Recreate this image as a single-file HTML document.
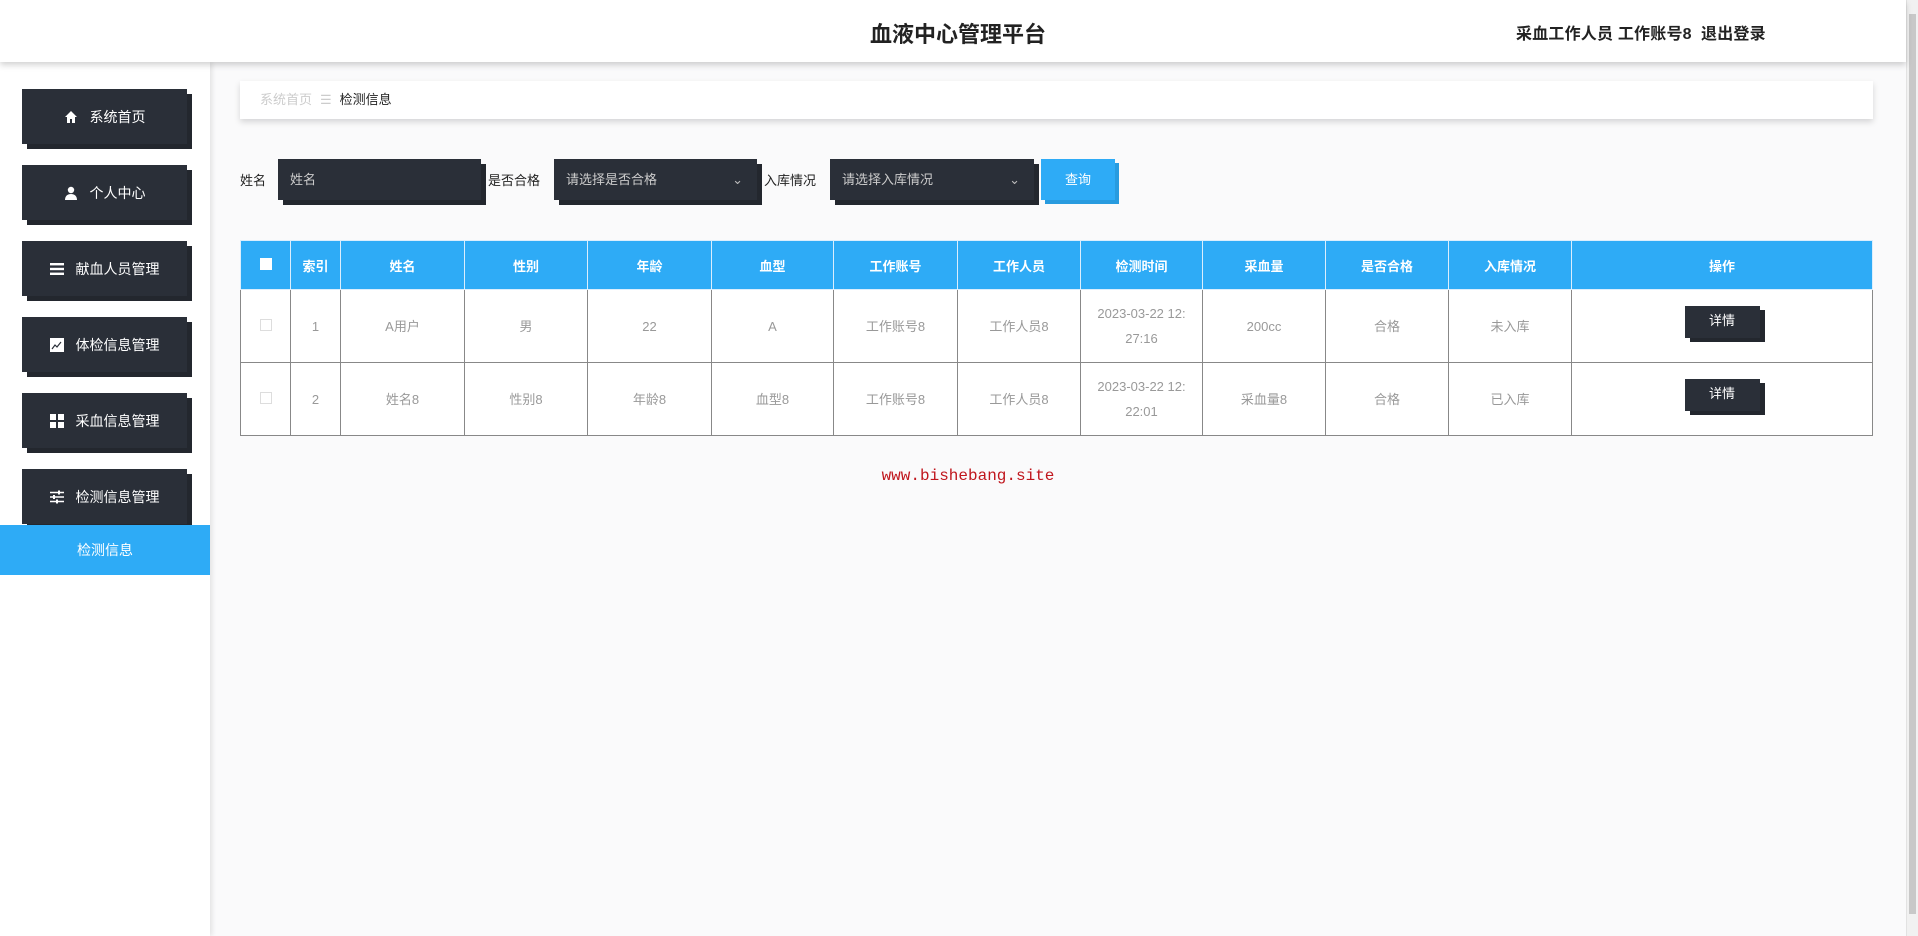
<!DOCTYPE html>
<html><head><meta charset="utf-8"><style>
*{margin:0;padding:0;box-sizing:border-box}
body{width:1918px;height:936px;overflow:hidden;background:#fafafb;font-family:"Liberation Sans","Noto Sans CJK SC",sans-serif;position:relative;color:#333}
.header{position:absolute;left:0;top:0;width:1906px;height:62px;background:#fff;box-shadow:0 3px 6px rgba(0,0,0,.18);z-index:3}
.title{position:absolute;left:0;width:1916px;top:17px;text-align:center;font-size:22px;font-weight:bold;color:#222}
.user{position:absolute;left:1516px;top:20px;font-size:16px;font-weight:bold;color:#222;letter-spacing:0.2px}
.scroll{position:absolute;left:1906px;top:0;width:12px;height:936px;background:#f1f1f1;border-left:1px solid #e2e2e2}
.scroll div{position:absolute;left:2px;top:14px;width:7px;height:900px;background:#c8c8c8}
.side{position:absolute;left:0;top:62px;width:210px;height:874px;background:#fff;box-shadow:2px 0 5px rgba(0,0,0,.1)}
.btn{position:absolute;left:22px;width:165px;height:55px;background:#2a2f38;color:#fff;font-size:14px;display:flex;align-items:center;justify-content:center;box-shadow:5px 5px 0 #23272e}
.btn svg{margin-right:12px}
.active{position:absolute;left:0;top:463px;width:210px;height:50px;background:#2eabf6;color:#fff;font-size:14px;text-align:center;line-height:50px}
.bc{position:absolute;left:240px;top:81px;width:1633px;height:38px;background:#fff;box-shadow:0 3px 6px rgba(0,0,0,.15);font-size:13px;line-height:38px;padding-left:20px}
.lab{position:absolute;top:170px;font-size:13px;color:#222}
.inp{position:absolute;top:159px;height:41px;background:#2a2f38;color:#ccc;font-size:13px;line-height:41px;padding-left:12px;box-shadow:5px 5px 0 #23272e}
.inp .ar{position:absolute;right:14px;top:0;color:#bbb}
.q{position:absolute;left:1041px;top:159px;width:74px;height:41px;background:#2eabf6;color:#fff;font-size:13px;text-align:center;line-height:41px;box-shadow:4px 4px 0 #289bdf}
table{position:absolute;left:240px;top:240px;border-collapse:collapse;width:1633px;font-size:13px}
th{background:#2eabf6;color:#fff;height:49px;border:1px solid #dbeefd;font-weight:bold}
td{height:73px;border:1px solid #888;text-align:center;color:#999;background:#fff;line-height:25px}
table{border:1px solid #777}
.cb{display:inline-block;width:12px;height:12px;border:1px solid #ddd;background:#fff}
th .cb{background:#fff;border:none}
.det{display:inline-block;width:75px;height:32px;background:#2a2f38;color:#fff;line-height:30px;box-shadow:5px 4px 0 #23272e;margin-top:-10px;vertical-align:middle}
.wm{position:absolute;left:0;width:1936px;top:467px;text-align:center;font-family:"Liberation Mono",monospace;color:#c0161d;font-size:16px}
</style></head><body>
<div class="header"><div class="title">血液中心管理平台</div><div class="user">采血工作人员 工作账号8&nbsp; 退出登录</div></div>
<div class="scroll"><div></div></div>
<div class="side">
<div class="btn" style="top:27px"><svg width="14" height="14" viewBox="0 0 14 14"><path d="M7 1L1 7h2v6h3V9h2v4h3V7h2z" fill="#fff"/></svg>系统首页</div>
<div class="btn" style="top:103px"><svg width="14" height="14" viewBox="0 0 14 14"><circle cx="7" cy="4" r="3.2" fill="#fff"/><path d="M1 14c0-4 2.5-6 6-6s6 2 6 6z" fill="#fff"/></svg>个人中心</div>
<div class="btn" style="top:179px"><svg width="14" height="12" viewBox="0 0 14 12"><rect y="0" width="14" height="2.4" fill="#fff"/><rect y="4.8" width="14" height="2.4" fill="#fff"/><rect y="9.6" width="14" height="2.4" fill="#fff"/></svg>献血人员管理</div>
<div class="btn" style="top:255px"><svg width="14" height="14" viewBox="0 0 14 14"><rect width="14" height="14" fill="#fff"/><path d="M2 11l3-4 2 2 4-5" stroke="#2a2f38" stroke-width="1.2" fill="none"/></svg>体检信息管理</div>
<div class="btn" style="top:331px"><svg width="14" height="14" viewBox="0 0 14 14"><rect width="6" height="6" fill="#fff"/><rect x="8" width="6" height="6" fill="#fff"/><rect y="8" width="6" height="6" fill="#fff"/><rect x="8" y="8" width="6" height="6" fill="#fff"/></svg>采血信息管理</div>
<div class="btn" style="top:407px"><svg width="14" height="14" viewBox="0 0 14 14"><path d="M0 2.5h14M0 7h14M0 11.5h14" stroke="#fff" stroke-width="1.5"/><rect x="8" y="0.5" width="2" height="4" fill="#fff"/><rect x="3" y="5" width="2" height="4" fill="#fff"/><rect x="6" y="9.5" width="2" height="4" fill="#fff"/></svg>检测信息管理</div>
<div class="active">检测信息</div>
</div>
<div class="bc"><span style="color:#ccc">系统首页</span><span style="color:#ccc;margin:0 8px">☰</span><span style="color:#222">检测信息</span></div>
<div class="lab" style="left:240px">姓名</div>
<div class="inp" style="left:278px;width:203px">姓名</div>
<div class="lab" style="left:488px">是否合格</div>
<div class="inp" style="left:554px;width:203px">请选择是否合格<span class="ar">⌄</span></div>
<div class="lab" style="left:764px">入库情况</div>
<div class="inp" style="left:830px;width:204px">请选择入库情况<span class="ar">⌄</span></div>
<div class="q">查询</div>
<table>
<tr><th style="width:50px"><span class="cb"></span></th><th style="width:50px">索引</th><th style="width:124px">姓名</th><th style="width:123px">性别</th><th style="width:124px">年龄</th><th style="width:122px">血型</th><th style="width:124px">工作账号</th><th style="width:123px">工作人员</th><th style="width:122px">检测时间</th><th style="width:123px">采血量</th><th style="width:123px">是否合格</th><th style="width:123px">入库情况</th><th>操作</th></tr>
<tr><td><span class="cb"></span></td><td>1</td><td>A用户</td><td>男</td><td>22</td><td>A</td><td>工作账号8</td><td>工作人员8</td><td>2023-03-22 12:<br>27:16</td><td>200cc</td><td>合格</td><td>未入库</td><td><span class="det">详情</span></td></tr>
<tr><td><span class="cb"></span></td><td>2</td><td>姓名8</td><td>性别8</td><td>年龄8</td><td>血型8</td><td>工作账号8</td><td>工作人员8</td><td>2023-03-22 12:<br>22:01</td><td>采血量8</td><td>合格</td><td>已入库</td><td><span class="det">详情</span></td></tr>
</table>
<div class="wm">www.bishebang.site</div>
</body></html>
